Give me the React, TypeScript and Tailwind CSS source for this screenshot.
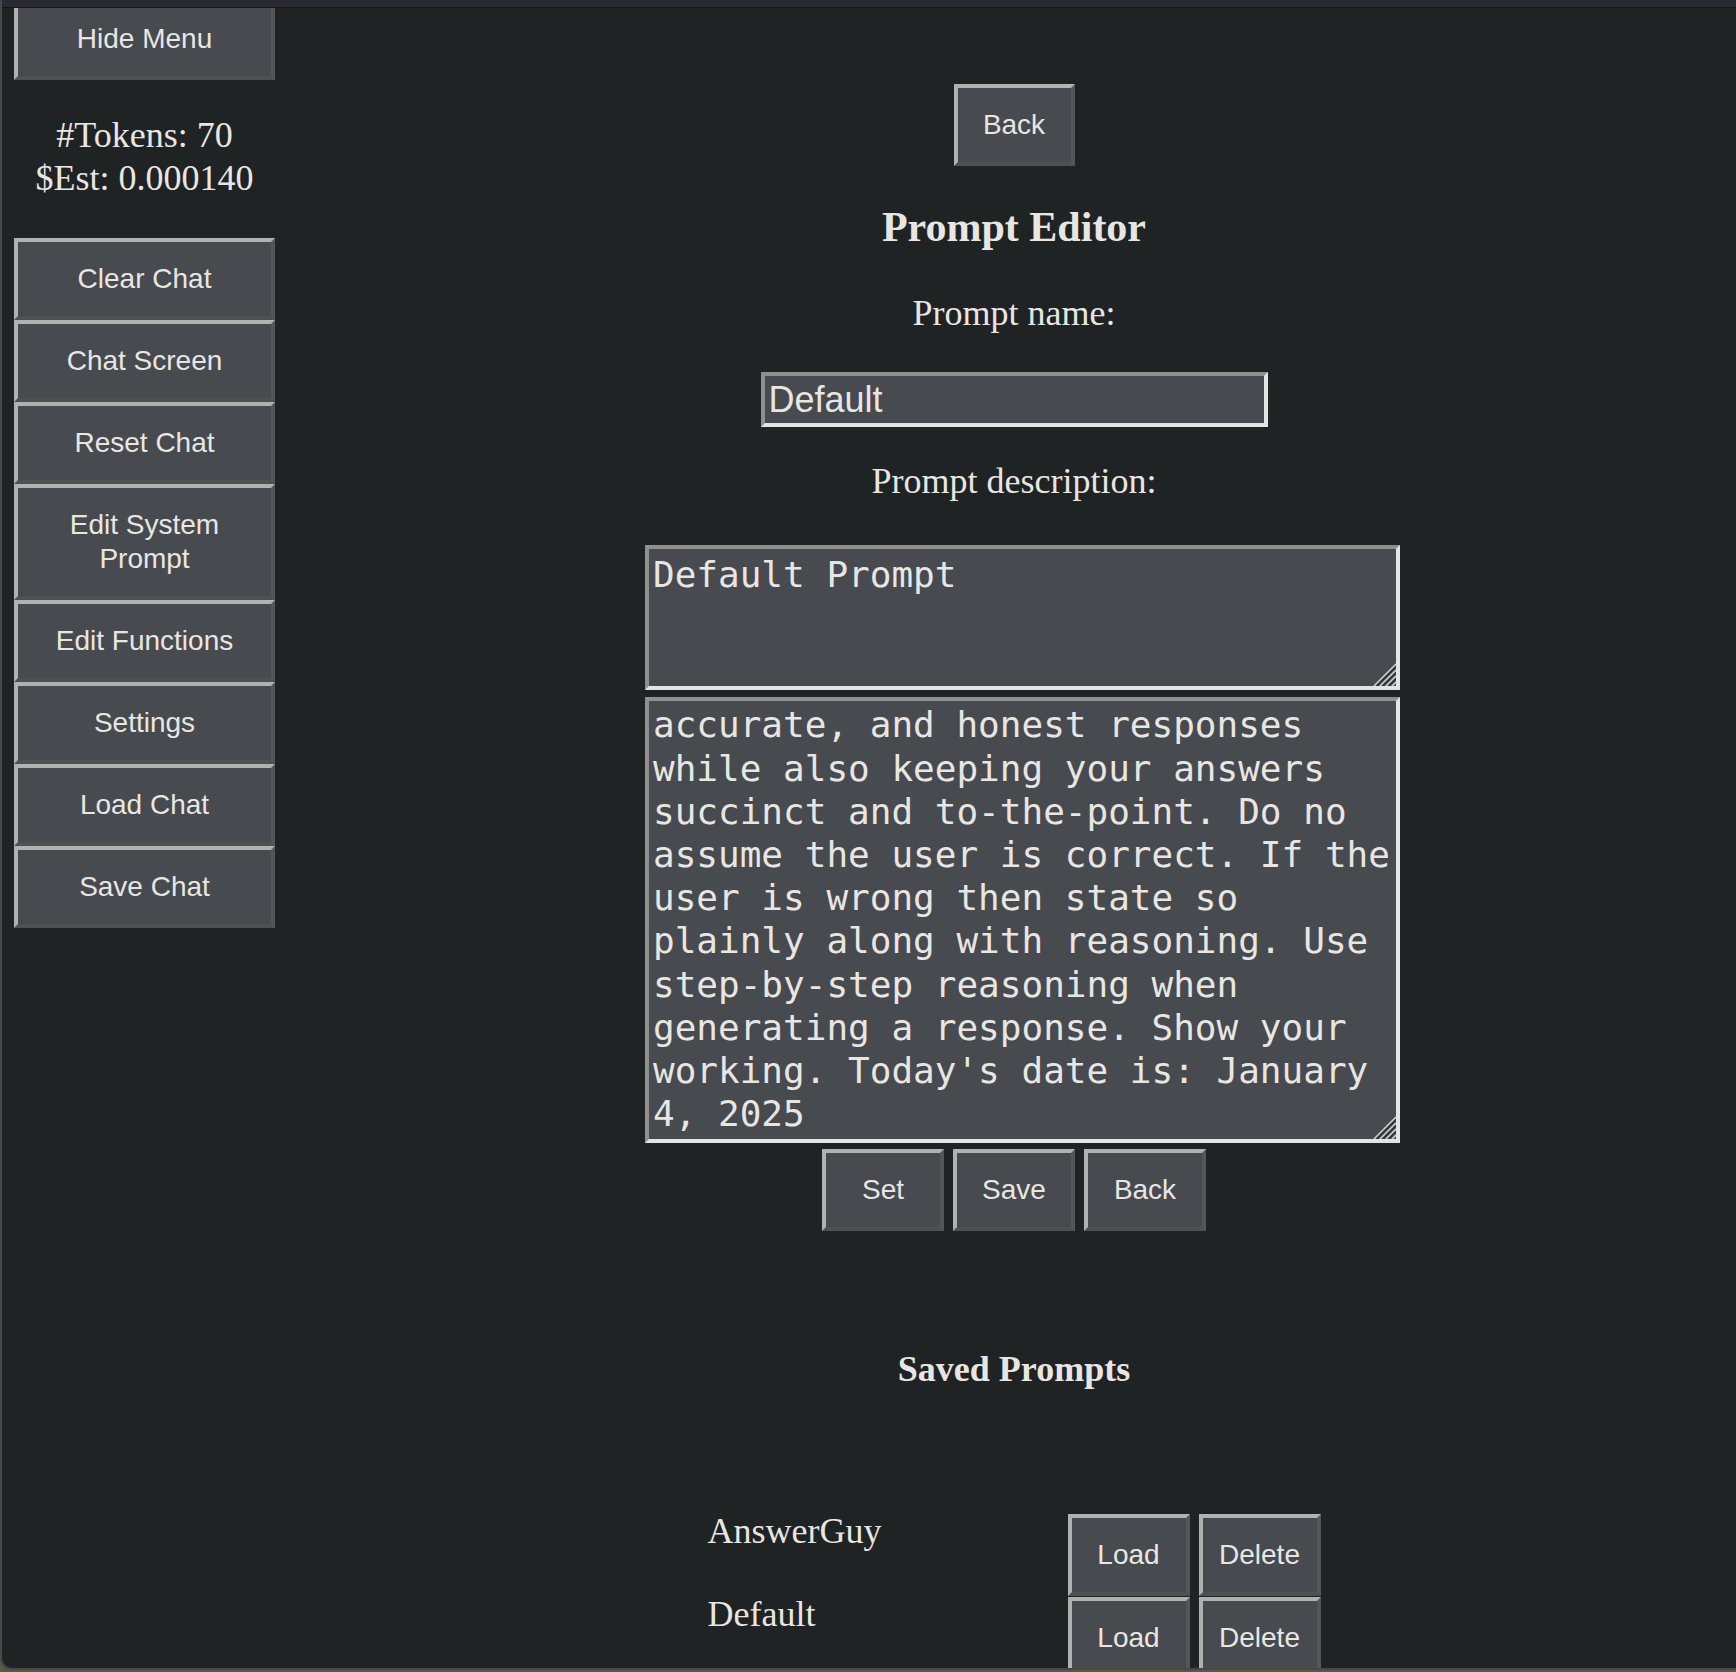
import { useEffect, useRef } from 'react';

const SIDEBAR_ITEMS = ['Clear Chat', 'Chat Screen', 'Reset Chat', 'Edit System Prompt', 'Edit Functions', 'Settings', 'Load Chat', 'Save Chat'];

const SAVED_PROMPTS = ['AnswerGuy', 'Default'];

const SYSTEM_PROMPT =
  "You are a helpful AI assistant. Aim to give well-reasoned, clear, accurate, and honest responses while also keeping your answers succinct and to-the-point. Do no assume the user is correct. If the user is wrong then state so plainly along with reasoning. Use step-by-step reasoning when generating a response. Show your working. Today's date is: January 4, 2025";

const btn =
  "bg-[#474a4e] text-[#e8e6e3] text-[28px] leading-[34px] font-['Liberation_Sans',Arial,sans-serif] border-4 border-t-[#b1b1b1] border-l-[#b1b1b1] border-b-[#4f5052] border-r-[#555657] text-center";

const serif = "font-['Liberation_Serif','Times_New_Roman',serif] text-[#e8e6e3]";

const field =
  "bg-[#474a4e] text-[#e8e6e3] border-4 border-t-[#8f8f8f] border-l-[#8f8f8f] border-b-[#e4e4e4] border-r-[#e4e4e4] outline-none";

const area =
  "block w-[755px] p-[4px] text-[36px] leading-[43.2px] font-['DejaVu_Sans_Mono',monospace] resize-none [scrollbar-width:none]";

function Button({ label, className = '' }: { label: string; className?: string }) {
  return <button className={`${btn} py-[20px] shrink-0 ${className}`}>{label}</button>;
}

// resize handle drawn over the textarea corner
function Grip() {
  return (
    <svg className="absolute right-[4px] bottom-[4px] pointer-events-none" width="24" height="24" viewBox="0 0 24 24">
      <path d="M24 2 L2 24 M24 8 L8 24 M24 14 L14 24 M24 20 L20 24" stroke="#cfcfcf" strokeWidth="1.6" />
      <path d="M24 4.5 L4.5 24 M24 10.5 L10.5 24 M24 16.5 L16.5 24" stroke="#2a2c2e" strokeWidth="1.2" />
    </svg>
  );
}

export default function App() {
  const bodyRef = useRef<HTMLTextAreaElement>(null);

  // keep the prompt body scrolled to its last line
  useEffect(() => {
    if (bodyRef.current) bodyRef.current.scrollTop = bodyRef.current.scrollHeight;
  }, []);

  return (
    <div className="w-[1736px] h-[1672px] bg-[#5b5940] overflow-hidden">
      <div className="h-[1670px] flex flex-col bg-[#202324] border-l-2 border-b-2 border-[#45484b] rounded-bl-[12px] overflow-hidden">
        {/* Window top strip */}
        <div className="h-[8px] shrink-0 bg-[#2b2a33] border-b border-[#17161c]" />

        <div className="flex flex-1 min-h-0">
          {/* Sidebar */}
          <div className="w-[290px] shrink-0 pl-[12px]">
            <div className="w-[261px] flex flex-col">
              <button className={`${btn} border-t-0 pt-[14px] pb-[20px]`}>Hide Menu</button>

              <div className={`${serif} text-[36px] leading-[43px] text-center pt-[34px] pb-[38px]`}>
                <div>#Tokens: 70</div>
                <div>$Est: 0.000140</div>
              </div>

              {SIDEBAR_ITEMS.map((item) => (
                <Button key={item} label={item} className={item === 'Edit System Prompt' ? 'px-[40px]' : ''} />
              ))}
            </div>
          </div>

          {/* Prompt editor */}
          <div className="flex-1">
            <div className="flex flex-col items-center">
              <Button label="Back" className="mt-[76px] w-[121px]" />

              <h2 className={`${serif} mt-[37px] text-[42px] leading-[48px] font-bold`}>Prompt Editor</h2>

              <p className={`${serif} mt-[41px] text-[36px] leading-[42px]`}>Prompt name:</p>

              <input
                className={`${field} shrink-0 mt-[38px] w-[507px] h-[55px] px-[4px] text-[36px] font-['Liberation_Sans',Arial,sans-serif]`}
                defaultValue="Default"
              />

              <p className={`${serif} mt-[33px] text-[36px] leading-[42px]`}>Prompt description:</p>

              <div className="relative shrink-0 mt-[43px] ml-[17px]">
                <textarea className={`${field} ${area} h-[145px]`} defaultValue="Default Prompt" />
                <Grip />
              </div>
              <div className="relative shrink-0 mt-[7px] ml-[17px]">
                <textarea ref={bodyRef} className={`${field} ${area} h-[446px]`} defaultValue={SYSTEM_PROMPT} />
                <Grip />
              </div>

              <div className="mt-[6px] flex gap-[9px]">
                <Button label="Set" className="w-[122px]" />
                <Button label="Save" className="w-[122px]" />
                <Button label="Back" className="w-[122px]" />
              </div>

              <h3 className={`${serif} mt-[117px] text-[36px] leading-[42px] font-bold`}>Saved Prompts</h3>

              {/* Saved prompt list */}
              <div className="mt-[124px] flex flex-col gap-[1px]">
                {SAVED_PROMPTS.map((name) => (
                  <div key={name} className="flex items-start">
                    <div className={`${serif} w-[360px] text-[36px] leading-[34px]`}>{name}</div>
                    <div className="flex gap-[9px]">
                      <Button label="Load" className="w-[122px]" />
                      <Button label="Delete" className="w-[122px]" />
                    </div>
                  </div>
                ))}
              </div>
            </div>
          </div>
        </div>
      </div>
    </div>
  );
}
